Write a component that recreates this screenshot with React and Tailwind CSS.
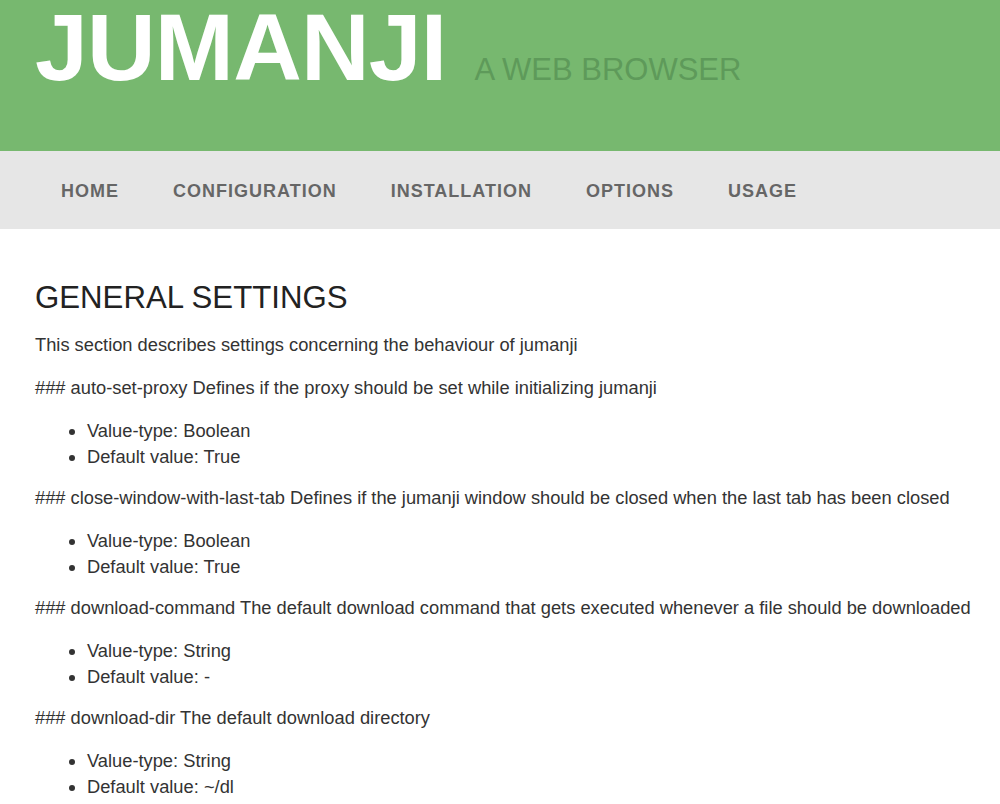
const navItems = ["Home", "Configuration", "Installation", "Options", "Usage"];

const settings = [
  {
    name: "auto-set-proxy",
    desc: "Defines if the proxy should be set while initializing jumanji",
    type: "Boolean",
    value: "True",
  },
  {
    name: "close-window-with-last-tab",
    desc: "Defines if the jumanji window should be closed when the last tab has been closed",
    type: "Boolean",
    value: "True",
  },
  {
    name: "download-command",
    desc: "The default download command that gets executed whenever a file should be downloaded",
    type: "String",
    value: "-",
  },
  {
    name: "download-dir",
    desc: "The default download directory",
    type: "String",
    value: "~/dl",
  },
];

const App = () => {
  return (
    <div className="min-h-screen bg-white font-['Liberation_Sans',Arial,sans-serif]">
      <header className="h-[151px] bg-[#77b86f] pl-[35px] flex items-baseline">
        <h1 className="text-[95px] leading-none font-bold tracking-[-0.8px] text-white">JUMANJI</h1>
        <span className="ml-[28px] text-[31px] leading-none text-[#5e9a5a]">A WEB BROWSER</span>
      </header>

      <nav className="h-[78px] bg-[#e6e6e6] pl-[61px] flex items-center gap-[54px]">
        {navItems.map((item) => (
          <a
            key={item}
            href="#"
            className="text-[18px] font-bold uppercase tracking-[1px] text-[#666666] translate-y-[1px]"
          >
            {item}
          </a>
        ))}
      </nav>

      <main className="pl-[35px] pr-[15px] pt-[51px] text-[18.3px] leading-[26px] text-[#333333]">
        <h2 className="text-[31.2px] leading-[36px] text-[#222222] mb-[16px]">GENERAL SETTINGS</h2>
        <p className="mb-[17px]">This section describes settings concerning the behaviour of jumanji</p>

        {settings.map((s) => (
          <div key={s.name}>
            <p className="mb-[17px]">
              ### {s.name} {s.desc}
            </p>
            <ul className="list-disc pl-[52px] mb-[15px]">
              <li>Value-type: {s.type}</li>
              <li>Default value: {s.value}</li>
            </ul>
          </div>
        ))}
      </main>
    </div>
  );
};

export default App;
